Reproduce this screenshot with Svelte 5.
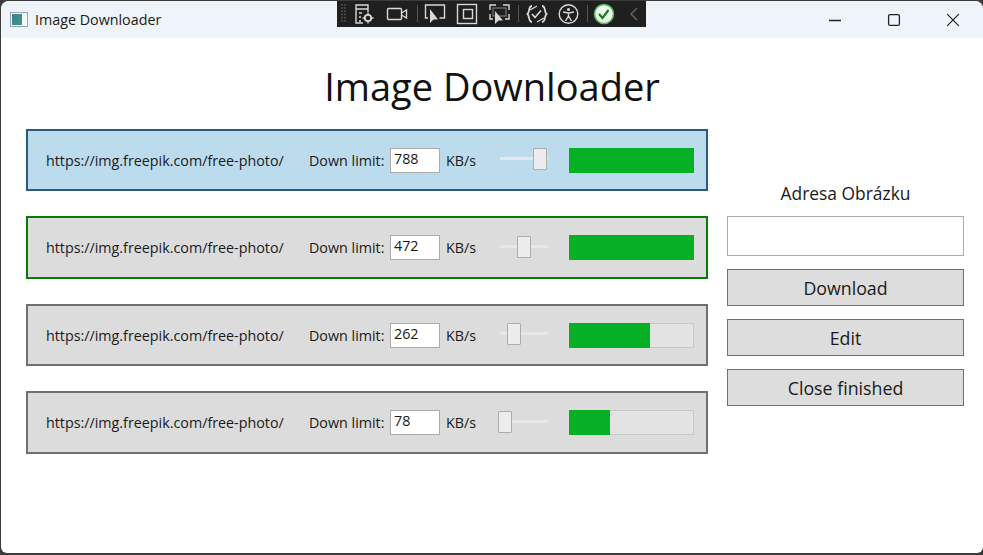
<script>
  const downloads = [
    { url: 'https://img.freepik.com/free-photo/', limit: 788, progress: 100, state: 'selected' },
    { url: 'https://img.freepik.com/free-photo/', limit: 472, progress: 100, state: 'done' },
    { url: 'https://img.freepik.com/free-photo/', limit: 262, progress: 64, state: '' },
    { url: 'https://img.freepik.com/free-photo/', limit: 78, progress: 32, state: '' }
  ];

  function thumbLeft(limit) {
    return Math.round((limit - 78) * 0.0493);
  }
</script>

<div class="window">
  <header class="titlebar">
    <span class="app-icon"><span></span></span>
    <span class="app-title">Image Downloader</span>
    <div class="controls">
      <button aria-label="Minimize">
        <svg width="14" height="14" viewBox="0 0 14 14"><path d="M1 7.5h12" stroke="#222" stroke-width="1.3" /></svg>
      </button>
      <button aria-label="Maximize">
        <svg width="14" height="14" viewBox="0 0 14 14"><rect x="1.6" y="1.6" width="10.8" height="10.8" rx="1.5" fill="none" stroke="#222" stroke-width="1.3" /></svg>
      </button>
      <button aria-label="Close">
        <svg width="14" height="14" viewBox="0 0 14 14"><path d="M1.2 1.2l11.6 11.6M12.8 1.2L1.2 12.8" stroke="#222" stroke-width="1.2" /></svg>
      </button>
    </div>
  </header>

  <!-- debug toolbar sits over the title bar -->
  <div class="devbar">
    <svg width="309" height="27" viewBox="337 0 309 27" fill="none" stroke="#d8d8d8" stroke-width="1.4">
      <path d="M342 4v19M345 4v19" stroke="#555" stroke-width="1.6" stroke-dasharray="1.6 1.6" />
      <path d="M363 23h-7V5h12v7M356 9h12M359 13h3M359 17h2M359 21h2" />
      <circle cx="368" cy="18" r="3.2" stroke-width="1.8" />
      <path d="M368 12.5v2M368 21.5v2M362.5 18h2M371.5 18h2" />
      <rect x="387.5" y="8.5" width="14" height="11" rx="1" />
      <path d="M401.5 13l5-3v8l-5-3" />
      <path d="M417.5 5v17" stroke="#555" stroke-width="1" />
      <path d="M428 18h-2.5V5h19v13h-5" />
      <path d="M430 9l0 14 3.5-3.5 4.5 0z" fill="#d8d8d8" stroke="none" />
      <rect x="457.5" y="4.5" width="19" height="19" />
      <rect x="463.5" y="9.5" width="9" height="9" />
      <path d="M490 10V5h6M503 5h6v5M490 14v5h3M509 14v5h-4" />
      <rect x="493" y="8" width="13" height="8" stroke="#888" stroke-width="1" />
      <path d="M495 11l0 13 3.5-3.5 4.5 0z" fill="#d8d8d8" stroke="none" />
      <path d="M518.5 5v17" stroke="#555" stroke-width="1" />
      <path d="M532 6c-4 0-2 6-4.5 8 2.5 2 .5 8 4.500 8M542 6c4 0 2 6 4.5 8-2.5 2-.5 8-4.5 8" stroke-width="1.8" />
      <path d="M532 14l3 3.5 6-7" stroke-width="1.6" />
      <path d="M530 10l7-4M544 18l-7 4" stroke-width="1.2" />
      <circle cx="568.5" cy="14" r="9.3" />
      <circle cx="568.5" cy="9.5" r="1.5" fill="#d8d8d8" stroke="none" />
      <path d="M563 12l5.5 1 5.5-1M568.5 13v3l-3 5M568.5 16l3 5" />
      <path d="M587.5 5v17" stroke="#555" stroke-width="1" />
      <circle cx="604" cy="14" r="9.5" fill="#eef5ee" stroke="#57b65a" stroke-width="1.6" />
      <path d="M599 14l3.5 4 6-8" stroke="#12801a" stroke-width="2.2" />
      <path d="M637 8l-6 6 6 6" stroke="#666" />
    </svg>
  </div>

  <main class="content">
    <h1>Image Downloader</h1>
    <div class="columns">
      <section class="rows">
        {#each downloads as item}
          <div class="row {item.state}">
            <span class="url">{item.url}</span>
            <span class="limit-label">Down limit:</span>
            <span class="limit-input">{item.limit}</span>
            <span class="unit">KB/s</span>
            <div class="slider">
              <span class="track"></span>
              <span class="thumb" style="left: {thumbLeft(item.limit)}px"></span>
            </div>
            <div class="progress">
              <div class="fill" style="width: {item.progress}%"></div>
            </div>
          </div>
        {/each}
      </section>

      <aside class="side">
        <div class="side-label">Adresa Obrázku</div>
        <div class="address"></div>
        <button class="action">Download</button>
        <button class="action">Edit</button>
        <button class="action">Close finished</button>
      </aside>
    </div>
  </main>
</div>

<style>
  :global(body) {
    background: #3c3c3c;
  }

  .window {
    position: relative;
    box-sizing: border-box;
    height: 552px;
    margin: 1px 0 2px 1px;
    background: #fff;
    border-radius: 8px 8px 6px 6px;
    overflow: hidden;
    font-family: "Open Sans", "Noto Sans", sans-serif;
    color: #1a1a1a;
  }

  .titlebar {
    display: flex;
    align-items: center;
    height: 37px;
    padding-left: 9px;
    background: #eef4f9;
  }

  .app-icon {
    box-sizing: border-box;
    display: block;
    width: 18px;
    height: 15px;
    padding: 1px 5px 1px 1px;
    background: #f4f6f7;
    border: 1px solid #9aa3aa;
  }

  .app-icon span {
    display: block;
    height: 100%;
    background: linear-gradient(135deg, #3a7f9c, #3f9a78);
  }

  .app-title {
    margin-left: 7px;
    font-size: 14.3px;
  }

  .controls {
    display: flex;
    margin-left: auto;
    margin-right: 1px;
  }

  .controls button {
    display: flex;
    align-items: center;
    justify-content: center;
    width: 59px;
    height: 37px;
    padding: 0;
    border: 0;
    background: none;
  }

  .devbar {
    position: absolute;
    top: -1px;
    left: 336px;
    width: 309px;
    height: 27px;
    background: #1f1f1f;
  }

  .devbar svg {
    display: block;
  }

  .content {
    padding: 0 18px 0 25px;
  }

  h1 {
    box-sizing: border-box;
    height: 90.9px;
    margin: 0 7px 0 0;
    padding-top: 23px;
    font-size: 38px;
    font-weight: 400;
    line-height: 50px;
    text-align: center;
    color: #111;
  }

  .columns {
    display: flex;
    gap: 19px;
  }

  .rows {
    display: flex;
    flex-direction: column;
    gap: 25px;
    width: 682px;
  }

  .row {
    box-sizing: border-box;
    display: flex;
    align-items: center;
    height: 62.5px;
    padding-left: 18px;
    background: #dcdcdc;
    border: 2.5px solid #707070;
    font-size: 14.3px;
  }

  .row.selected {
    background: #bcdcee;
    border-color: #2b5a80;
  }

  .row.done {
    border-color: #0a7a0a;
  }

  .url {
    width: 263px;
    white-space: nowrap;
  }

  .limit-label {
    width: 81px;
    white-space: nowrap;
  }

  .limit-input {
    box-sizing: border-box;
    width: 50px;
    height: 25px;
    padding: 0 3px;
    background: #fff;
    border: 1px solid #ababab;
    line-height: 20px;
  }

  .unit {
    width: 52px;
    margin-left: 6px;
  }

  .slider {
    position: relative;
    flex: none;
    width: 50px;
    height: 24px;
  }

  .track {
    position: absolute;
    top: 9px;
    left: 2px;
    right: 0;
    height: 3px;
    background: #e7e7e7;
  }

  .thumb {
    box-sizing: border-box;
    position: absolute;
    top: 0;
    width: 14px;
    height: 22px;
    background: #ececec;
    border: 1px solid #adadad;
    border-radius: 1px;
  }

  .progress {
    flex: none;
    box-sizing: border-box;
    width: 125px;
    height: 25px;
    margin-left: 21px;
    background: #e3e3e3;
    border: 1px solid #c8c8c8;
  }

  .fill {
    height: 23px;
    background: #06b025;
    outline: 1px solid #06b025;
  }

  .side {
    display: flex;
    flex-direction: column;
    width: 237px;
    padding-top: 53.2px;
  }

  .side-label {
    height: 34px;
    font-size: 17.4px;
    line-height: 22px;
    text-align: center;
  }

  .address {
    box-sizing: border-box;
    height: 40px;
    margin-bottom: 13px;
    background: #fff;
    border: 1px solid #ababab;
  }

  .action {
    height: 37px;
    margin-bottom: 13px;
    padding: 0;
    background: #dddddd;
    border: 1px solid #707070;
    font: inherit;
    font-size: 17.8px;
    color: #1a1a1a;
  }
</style>
